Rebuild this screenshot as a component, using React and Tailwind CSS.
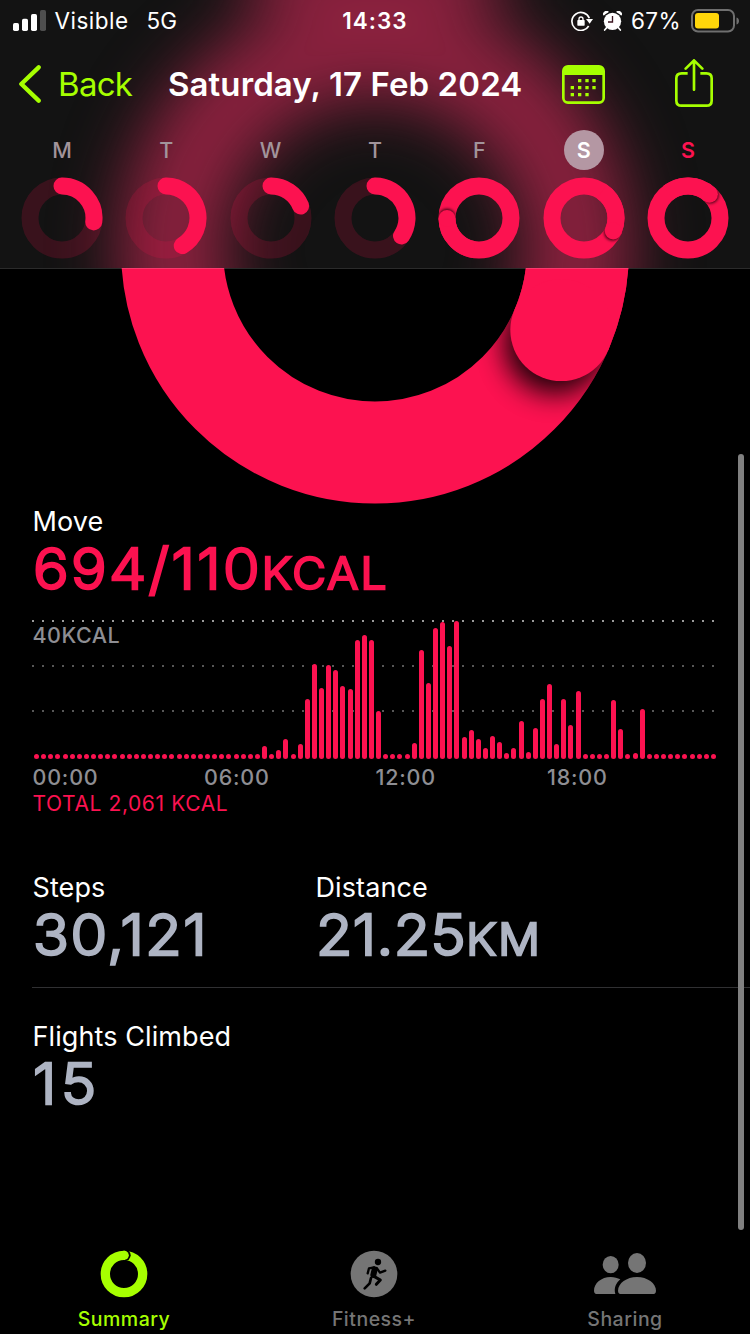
const days = [
  { label: 'M', angle: 97 },
  { label: 'T', angle: 149.5 },
  { label: 'W', angle: 68 },
  { label: 'T', angle: 124 },
  { label: 'F', angle: 269, closed: true },
  { label: 'S', angle: 114, closed: true, selected: true },
  { label: 'S', angle: 42, closed: true, today: true }
];

// 15 minute buckets, bar height in px
const bars = [
  ...Array(32).fill(5),
  13, 5, 9, 20, 5, 15, 60, 95, 71, 94, 89, 73, 70, 119, 124, 119,
  48, 5, 5, 5, 5, 16, 109, 76, 131, 137, 113, 138, 22, 29, 20, 11,
  23, 17, 6, 11, 38, 7, 31, 60, 75, 15, 60, 34, 68, 5, 5, 5,
  5, 59, 30, 5, 6, 50, ...Array(10).fill(5)
];

const point = (cx, cy, r, angle) => {
  const rad = ((angle - 90) * Math.PI) / 180;
  return [cx + r * Math.cos(rad), cy + r * Math.sin(rad)];
};

function Ring({ id, cx, cy, r, width, angle, closed, blur, lead = 2.2, opacity = 0.7 }) {
  const start = closed ? angle - 80 : 0;
  const [x1, y1] = point(cx, cy, r, start);
  const [x2, y2] = point(cx, cy, r, angle);
  const [sx, sy] = point(cx, cy, r, angle + lead);
  return (
    <>
      <mask id={id} maskUnits="userSpaceOnUse" x={cx - r * 2} y={cy - r * 2} width={r * 4} height={r * 4}>
        <circle cx={cx} cy={cy} r={r} fill="none" stroke="#fff" strokeWidth={width} />
      </mask>
      <circle cx={cx} cy={cy} r={r} fill="none" stroke="#fc1250" strokeOpacity={closed ? 1 : 0.17} strokeWidth={width} />
      {closed && (
        <g mask={`url(#${id})`}>
          <circle cx={sx} cy={sy} r={width / 2} fill="#000" opacity={opacity} style={{ filter: `blur(${blur}px)` }} />
        </g>
      )}
      <path
        d={`M${x1} ${y1}A${r} ${r} 0 0 1 ${x2} ${y2}`}
        fill="none"
        stroke="#fc1250"
        strokeWidth={width}
        strokeLinecap={closed ? 'butt' : 'round'}
      />
      {closed && <circle cx={x2} cy={y2} r={width / 2} fill="#fc1250" />}
    </>
  );
}

function StatusBar() {
  return (
    <div className="grid h-10 grid-cols-[1fr_66px_1fr] items-center text-[22.5px] text-white">
      <div className="flex items-center pt-px">
        <svg className="ml-[13px] h-[21px] w-[33px]" viewBox="0 0 99 63" fill="#fff">
          <rect x="0" y="39" width="18" height="24" rx="5" />
          <rect x="27" y="26" width="18" height="37" rx="5" />
          <rect x="54" y="12" width="18" height="51" rx="5" />
          <rect x="81" y="0" width="18" height="63" rx="5" opacity=".25" />
        </svg>
        <span className="ml-[8.5px] w-[92px] tracking-[0.5px]">Visible</span>
        <span>5G</span>
      </div>
      <span className="flex justify-center pt-px font-semibold tracking-[1px] whitespace-nowrap">14:33</span>
      <div className="flex items-center justify-end pt-px">
        <svg className="mr-[10px] h-[20px] w-[22px]" viewBox="0 0 66 60">
          <path d="M53 45A27 27 0 1 1 55 22" fill="none" stroke="#fff" strokeWidth="5" />
          <path d="M45 24H66L56 38z" fill="#fff" />
          <rect x="19" y="27" width="22" height="17" rx="2" fill="#fff" />
          <path d="M24 29v-5a6 6 0 0 1 12 0v5" fill="none" stroke="#fff" strokeWidth="4" />
        </svg>
        <svg className="mr-[9px] h-[20px] w-[19px]" viewBox="0 0 57 60">
          <circle cx="28.500" cy="31" r="26" fill="#fff" />
          <path d="M3 13a8 8 0 0 1 13-9M54 13a8 8 0 0 0-13-9" fill="#fff" stroke="#fff" strokeWidth="4" />
          <path d="M11 50l-6 7M46 50l6 7" stroke="#fff" strokeWidth="5" strokeLinecap="round" />
          <path d="M28.500 15v18H15" fill="none" stroke="#3b141f" strokeWidth="4" />
        </svg>
        <span className="tracking-[0.4px]">67%</span>
        <svg className="mr-[11px] ml-[10px] h-6 w-[48px]" viewBox="0 0 48 24">
          <rect x="1" y="1" width="42" height="21.500" rx="6" fill="none" stroke="#6f6f6f" strokeWidth="2" />
          <rect x="4" y="4" width="24" height="15.500" rx="3" fill="#ffd60a" />
          <path d="M45.500 8.500v7c2-.6 2.500-2 2.500-3.500s-.5-2.900-2.500-3.500z" fill="#6f6f6f" />
        </svg>
      </div>
    </div>
  );
}

function NavBar() {
  return (
    <div className="flex h-[88px] items-center">
      <svg className="ml-[19px] h-[38px] w-[22px]" viewBox="0 0 66 114">
        <path d="M59 7L7 57l52 50" fill="none" stroke="#a6ff00" strokeWidth="13" strokeLinecap="round" strokeLinejoin="round" />
      </svg>
      <span className="ml-[17px] w-[110px] pt-[2px] text-[33px] tracking-[-0.7px] text-[#a6ff00]">Back</span>
      <h1 className="w-[394px] pt-[2px] text-[33px] font-semibold tracking-[0.1px] whitespace-nowrap text-white">Saturday, 17 Feb 2024</h1>
      <svg className="h-[39px] w-[43px]" viewBox="0 0 129 117">
        <rect x="4" y="4" width="121" height="109" rx="14" fill="none" stroke="#a6ff00" strokeWidth="8" />
        <path d="M3 30V16Q3 3 16 3H113Q126 3 126 16V30z" fill="#a6ff00" />
        <path
          d="M48 47h10M70 47h10M91 47h10M26 68h10M48 68h10M70 68h10M91 68h10M26 89h10M48 89h10M70 89h10"
          stroke="#a6ff00"
          strokeWidth="10"
        />
      </svg>
      <svg className="mb-[2px] ml-[70px] h-12 w-[38px]" viewBox="0 0 114 144" fill="none" stroke="#a6ff00" strokeWidth="8" strokeLinecap="round" strokeLinejoin="round">
        <path d="M38 43H20Q4 43 4 58V125Q4 140 20 140H94Q110 140 110 125V58Q110 43 94 43H76" strokeLinecap="butt" />
        <path d="M57 92V5M32 29L57 4l25 25" />
      </svg>
    </div>
  );
}

function WeekStrip() {
  return (
    <div className="grid grid-cols-7 px-[9.8px] pt-[2px]">
      {days.map((day, index) => (
        <div key={index} className="flex flex-col items-center">
          <span
            className={`grid h-10 w-10 place-items-center rounded-full text-[21.5px] ${
              day.selected
                ? 'bg-[#b497a3] font-semibold text-white'
                : day.today
                  ? 'font-semibold text-[#fc1250]'
                  : 'font-medium text-[#a2949b]'
            }`}
          >
            {day.label}
          </span>
          <svg className="mt-[7px] h-[82px] w-[82px]" viewBox="0 0 82 82">
            <Ring id={`day-${index}`} cx={41} cy={41} r={32} width={17} angle={day.angle} closed={day.closed} blur={1.6} opacity={0.75} />
          </svg>
        </div>
      ))}
    </div>
  );
}

function Header() {
  return (
    <header className="relative h-[268px] shrink-0 overflow-hidden bg-[#131313]">
      {/* move ring showing through the translucent bar */}
      <svg className="absolute top-0 left-0 h-[268px] w-[750px]" viewBox="0 0 750 268">
        <g fill="none" stroke="#8a213e" style={{ filter: 'blur(32px)' }}>
          <circle cx="375" cy="249.500" r="203" strokeWidth="106" />
          <path d="M250 -30H500" strokeWidth="64" />
        </g>
      </svg>
      <div className="relative">
        <StatusBar />
        <NavBar />
        <WeekStrip />
      </div>
    </header>
  );
}

function Metric({ label, value, unit, spacing, color = 'text-[#aeb4c3]' }) {
  return (
    <div className="pl-[0.5px]">
      <p className="h-[34px] text-[27px] leading-[34px] tracking-[0.1px] whitespace-nowrap text-white">{label}</p>
      <p
        className={`mt-px h-[58px] origin-left scale-x-105 text-[56.5px] leading-[58px] font-light whitespace-nowrap [-webkit-text-stroke:2.5px_currentColor] [stroke-linejoin:round] ${spacing} ${color}`}
      >
        {value}
        {unit && <span className="text-[44px] leading-none tracking-[2px]">{unit}</span>}
      </p>
    </div>
  );
}

function Chart() {
  return (
    <div className="mt-[22px] ml-8">
      <div className="relative h-[139px] w-[684px]">
        {['text-[#9a9a9a]', 'text-[#575757]', 'text-[#575757]'].map((tone, index) => (
          <div
            key={index}
            className={`mb-[43px] h-[2px] bg-[repeating-linear-gradient(90deg,currentColor_0_2px,transparent_2px_10px)] ${tone}`}
          />
        ))}
        <span className="absolute top-[2px] left-[0.5px] text-[21.5px] leading-[26px] font-medium tracking-[0.5px] text-[#8e8e93]">40KCAL</span>
        <div className="absolute inset-0 flex items-end justify-between pl-[2px]">
          {bars.map((height, index) => (
            <div key={index} className="w-[5px] rounded-full bg-[#fc1250]" style={{ height }} />
          ))}
        </div>
      </div>
      <div className="mt-1 ml-[0.5px] grid h-7 w-[686px] grid-cols-4 text-[21.5px] leading-7 font-medium tracking-[0.8px] text-[#8e8e93]">
        {['00:00', '06:00', '12:00', '18:00'].map((hour) => (
          <span key={hour}>{hour}</span>
        ))}
      </div>
      <p className="ml-[0.5px] h-[25px] text-[21px] leading-[25px] tracking-[0.6px] text-[#fc1250]">TOTAL 2,061 KCAL</p>
    </div>
  );
}

function TabBar() {
  return (
    <nav className="mt-auto grid h-[84px] grid-cols-[248px_252px_250px] text-[19.5px] font-medium text-[#757575]">
      <div className="flex flex-col items-center text-[#a6ff00]">
        <svg className="h-12 w-12" viewBox="0 0 144 144">
          <circle cx="72" cy="72" r="56" fill="none" stroke="currentColor" strokeWidth="28" />
          <path d="M75 -1A17 17 0 0 1 75 33z" fill="#000" />
          <circle cx="73" cy="16" r="13.500" fill="currentColor" />
        </svg>
        <span className="mt-[9px] leading-[24px] tracking-[0.5px]">Summary</span>
      </div>
      <div className="flex flex-col items-center">
        <svg className="h-12 w-12" viewBox="870 59 144 144">
          <circle cx="942" cy="131" r="70" fill="currentColor" />
          <g fill="none" stroke="#000" strokeLinecap="round" strokeLinejoin="round">
            <circle cx="954" cy="95" r="9.500" fill="#000" stroke="none" />
            <path d="M944 117L940 134" strokeWidth="18" />
            <path d="M942 111L927 114L923 129M950 113L960 127L976 121" strokeWidth="7" />
            <path d="M942 138L961 149L949 162" strokeWidth="9" />
            <path d="M933 143L929 159L914 174" strokeWidth="8" />
          </g>
        </svg>
        <span className="mt-[9px] leading-[24px] tracking-[0.5px]">Fitness+</span>
      </div>
      <div className="flex flex-col items-center">
        <svg className="mt-[3px] h-[41px] w-[62px]" viewBox="582 159 186 123" fill="currentColor">
          <ellipse cx="632" cy="194" rx="24" ry="26" />
          <ellipse cx="711" cy="189" rx="27" ry="30" />
          <path d="M582 272C582 250 604 231 632 231C643 231 653 234 661 238C648 249 641 264 646 282H592Q582 282 582 272z" />
          <path d="M654 272C654 250 680 231 711 231C742 231 768 250 768 272Q768 282 758 282H664Q654 282 654 272z" />
        </svg>
        <span className="mt-[13px] leading-[24px] tracking-[0.5px]">Sharing</span>
      </div>
    </nav>
  );
}

export default function App() {
  return (
    <div className="relative flex h-[1334px] w-[750px] flex-col overflow-hidden bg-black font-['Inter',sans-serif]">
      <Header />
      <main className="relative">
        <div className="absolute top-0 h-px w-full bg-white/17" />
        <svg className="block h-[237px] w-[750px]" viewBox="0 268 750 237">
          <Ring id="move" cx={375} cy={249.5} r={203} width={102} angle={113.4} closed blur={14} lead={4} opacity={0.9} />
        </svg>
        <div className="pl-8">
          <Metric label="Move" value="694/110" unit="KCAL" spacing="tracking-[2.2px]" color="text-[#fc1250]" />
        </div>
        <Chart />
        <div className="mt-[55px] ml-8 grid grid-cols-[283px_1fr] border-b border-[#303032] pb-[23px]">
          <Metric label="Steps" value="30,121" spacing="tracking-[1.5px]" />
          <Metric label="Distance" value="21.25" unit="KM" spacing="tracking-[0.4px]" />
        </div>
        <div className="mt-8 ml-8">
          <Metric label="Flights Climbed" value="15" spacing="tracking-[4.5px]" />
        </div>
      </main>
      <TabBar />
      <div className="absolute top-[454px] right-[6px] h-[776px] w-[6px] rounded-full bg-[#808080]" />
    </div>
  );
}
